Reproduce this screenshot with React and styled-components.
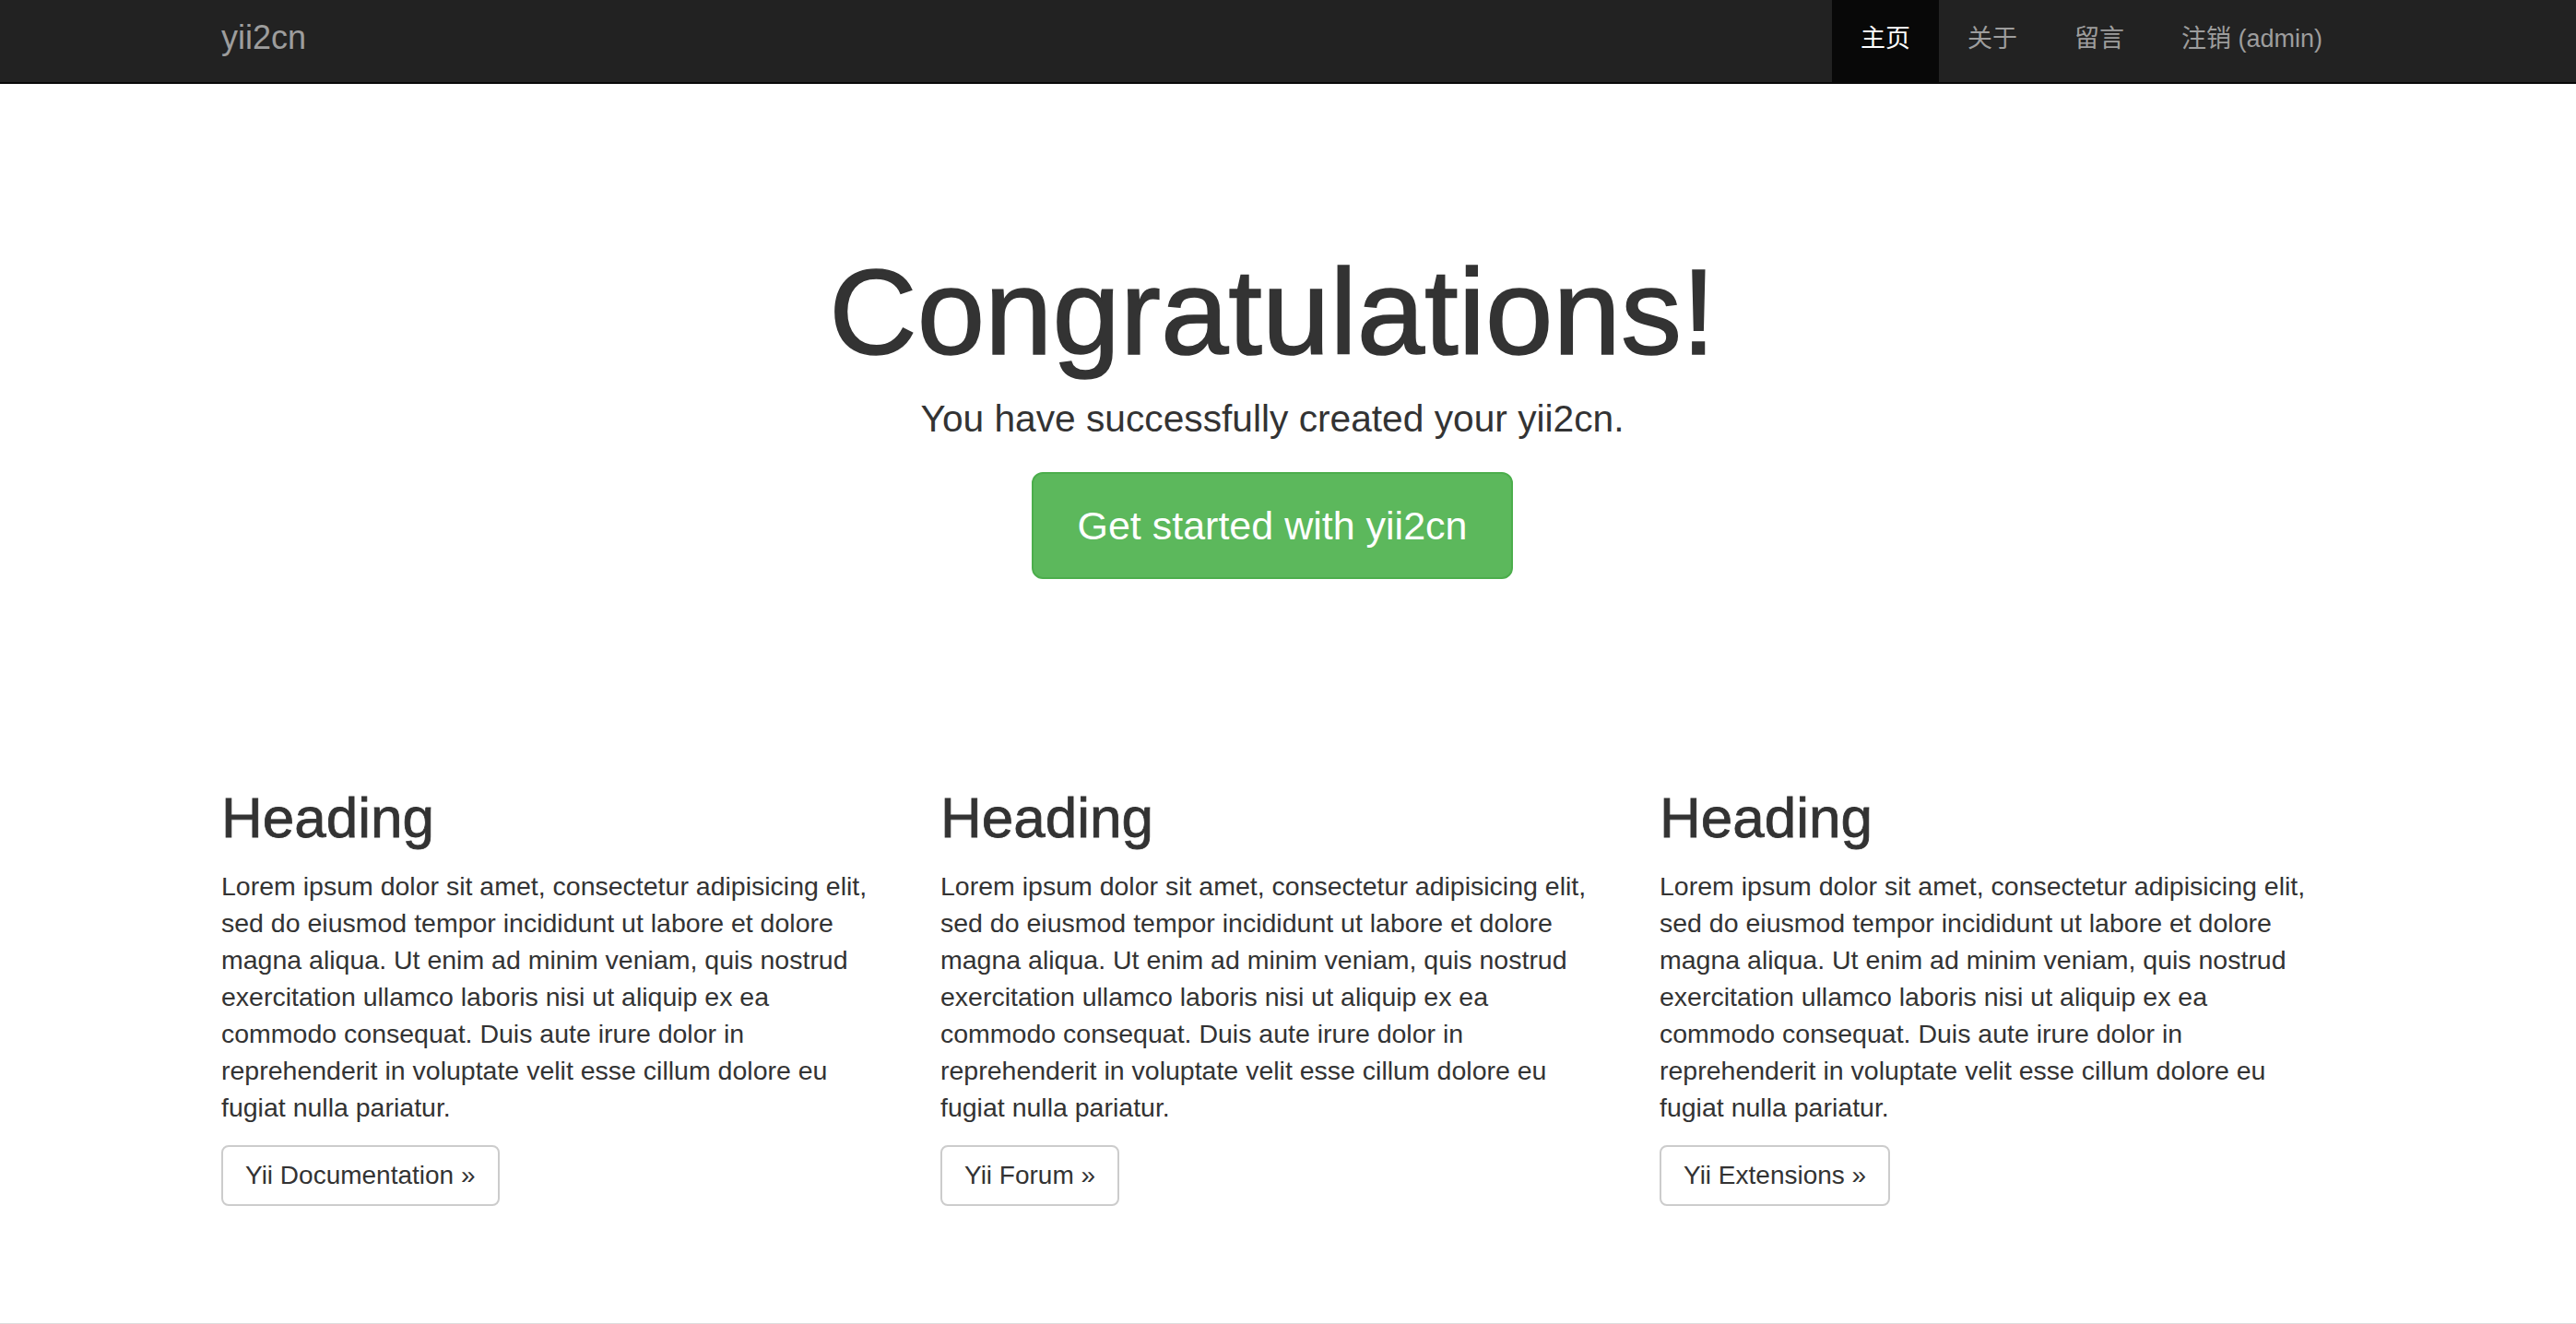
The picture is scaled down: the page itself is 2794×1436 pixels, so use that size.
import React from 'react';
import styled, { createGlobalStyle } from 'styled-components';

const GlobalStyle = createGlobalStyle`
  html, body {
    margin: 0;
    padding: 0;
    background: #fff;
  }
  body {
    font-family: "Liberation Sans", "Noto Sans CJK SC", Arial, sans-serif;
    color: #333;
  }
  * {
    box-sizing: border-box;
  }
`;

const navItems = [
  { label: '主页', active: true },
  { label: '关于' },
  { label: '留言' },
  { label: '注销 (admin)' },
];

const columns = [
  { title: 'Heading', link: 'Yii Documentation »' },
  { title: 'Heading', link: 'Yii Forum »' },
  { title: 'Heading', link: 'Yii Extensions »' },
];

const lorem =
  'Lorem ipsum dolor sit amet, consectetur adipisicing elit, sed do eiusmod tempor incididunt ut labore et dolore magna aliqua. Ut enim ad minim veniam, quis nostrud exercitation ullamco laboris nisi ut aliquip ex ea commodo consequat. Duis aute irure dolor in reprehenderit in voluptate velit esse cillum dolore eu fugiat nulla pariatur.';

export default function App() {
  return (
    <>
      <GlobalStyle />
      <Navbar>
        <NavContainer>
          <Brand href="#">yii2cn</Brand>
          <NavList>
            {navItems.map((item) => (
              <li key={item.label}>
                <NavLink href="#" $active={item.active}>
                  {item.label}
                </NavLink>
              </li>
            ))}
          </NavList>
        </NavContainer>
      </Navbar>

      <Main>
        <Container>
          <Jumbotron>
            <Title>Congratulations!</Title>
            <Lead>You have successfully created your yii2cn.</Lead>
            <SuccessButton href="#">Get started with yii2cn</SuccessButton>
          </Jumbotron>

          <Row>
            {columns.map((col) => (
              <Column key={col.link}>
                <ColumnTitle>{col.title}</ColumnTitle>
                <Text>{lorem}</Text>
                <DefaultButton href="#">{col.link}</DefaultButton>
              </Column>
            ))}
          </Row>
        </Container>
      </Main>

      <Footer />
    </>
  );
}

// the reference page keeps a scrollbar gutter on the right
const Navbar = styled.header`
  background: #222;
  border-bottom: 2px solid #080808;
  padding-right: 34px;
`;

const NavContainer = styled.div`
  width: 2340px;
  height: 89px;
  margin: 0 auto;
  display: flex;
  justify-content: space-between;
  align-items: stretch;
`;

const Brand = styled.a`
  display: flex;
  align-items: center;
  padding: 0 30px 7px;
  font-size: 36px;
  color: #9d9d9d;
  text-decoration: none;
`;

const NavList = styled.ul`
  display: flex;
  margin: 0;
  padding: 0;
  list-style: none;

  li {
    display: flex;
  }
`;

const NavLink = styled.a`
  display: flex;
  align-items: center;
  padding: 0 31px 11px;
  font-size: 27px;
  text-decoration: none;
  color: ${(p) => (p.$active ? '#fff' : '#9d9d9d')};
  background: ${(p) => (p.$active ? '#080808' : 'transparent')};
`;

const Main = styled.main`
  padding-right: 34px;
`;

const Container = styled.div`
  width: 2340px;
  margin: 0 auto;
`;

const Jumbotron = styled.section`
  text-align: center;
  padding-top: 175px;
`;

// Helvetica Neue medium look: thicken the regular face a little
const Title = styled.h1`
  margin: 0;
  font-size: 132px;
  font-weight: 500;
  line-height: 1.1;
  color: #333;
  -webkit-text-stroke: 1.6px #333;
`;

const Lead = styled.p`
  margin: 13px 0 28px;
  font-size: 40.7px;
  line-height: 60px;
  font-weight: 300;
  color: #333;
`;

const SuccessButton = styled.a`
  display: inline-block;
  padding: 28px 47px;
  font-size: 43px;
  line-height: 56px;
  color: #fff;
  text-decoration: none;
  background: #5cb85c;
  border: 2px solid #4cae4c;
  border-radius: 12px;
`;

const Row = styled.div`
  display: grid;
  grid-template-columns: repeat(3, 1fr);
  margin-top: 225px;
`;

const Column = styled.div`
  padding: 0 30px;
`;

const ColumnTitle = styled.h2`
  margin: 0 0 20px;
  font-size: 62px;
  font-weight: 500;
  line-height: 1.1;
  color: #333;
  -webkit-text-stroke: 0.8px #333;
`;

const Text = styled.p`
  margin: 0 0 21px;
  font-size: 28.5px;
  line-height: 40px;
  color: #333;
`;

const DefaultButton = styled.a`
  display: inline-block;
  padding: 11px 24px;
  font-size: 28px;
  line-height: 40px;
  color: #333;
  text-decoration: none;
  background: #fff;
  border: 2px solid #ccc;
  border-radius: 8px;
`;

const Footer = styled.footer`
  margin-top: 127px;
  height: 120px;
  background: #f5f5f5;
  border-top: 2px solid #ddd;
`;
